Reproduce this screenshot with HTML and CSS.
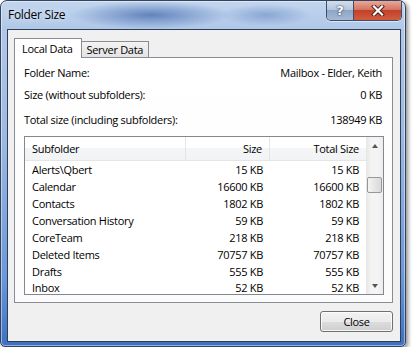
FILE: index.html
```html
<!DOCTYPE html>
<html lang="en">
<head>
    <meta charset="UTF-8">
    <title>Folder Size</title>
    <link rel="stylesheet" href="styles.css">
</head>
<body>
    <div class="window">
        <div class="titlebar">
            <span class="title">Folder Size</span>
            <div class="caption-buttons">
                <span class="cap-btn help">?</span>
                <span class="cap-btn close">
                    <svg width="16" height="11" viewBox="0 0 16 11">
                        <path d="M4 1.5 L12 9.5 M12 1.5 L4 9.5" stroke="#4a1d14" stroke-width="4" stroke-linecap="square"/>
                        <path d="M4 1.5 L12 9.5 M12 1.5 L4 9.5" stroke="#fff" stroke-width="2.2" stroke-linecap="square"/>
                    </svg>
                </span>
            </div>
        </div>
        <div class="client">
            <div class="tabs">
                <span class="tab active">Local Data</span>
                <span class="tab">Server Data</span>
            </div>
            <div class="panel">
                <div class="info-row first"><span>Folder Name:</span><span>Mailbox - Elder, Keith</span></div>
                <div class="info-row second"><span>Size (without subfolders):</span><span>0 KB</span></div>
                <div class="info-row third"><span>Total size (including subfolders):</span><span>138949 KB</span></div>
                <div class="list">
                    <div class="list-body">
                        <div class="list-header">
                            <span class="col name">Subfolder</span>
                            <span class="col num">Size</span>
                            <span class="col num last">Total Size</span>
                        </div>
                        <div class="list-row"><span class="col name">Alerts\Qbert</span><span class="col num">15 KB</span><span class="col num last">15 KB</span></div>
                        <div class="list-row"><span class="col name">Calendar</span><span class="col num">16600 KB</span><span class="col num last">16600 KB</span></div>
                        <div class="list-row"><span class="col name">Contacts</span><span class="col num">1802 KB</span><span class="col num last">1802 KB</span></div>
                        <div class="list-row"><span class="col name">Conversation History</span><span class="col num">59 KB</span><span class="col num last">59 KB</span></div>
                        <div class="list-row"><span class="col name">CoreTeam</span><span class="col num">218 KB</span><span class="col num last">218 KB</span></div>
                        <div class="list-row"><span class="col name">Deleted Items</span><span class="col num">70757 KB</span><span class="col num last">70757 KB</span></div>
                        <div class="list-row"><span class="col name">Drafts</span><span class="col num">555 KB</span><span class="col num last">555 KB</span></div>
                        <div class="list-row cut"><span class="col name">Inbox</span><span class="col num">52 KB</span><span class="col num last">52 KB</span></div>
                    </div>
                    <div class="scrollbar">
                        <div class="arrow up"></div>
                        <div class="track">
                            <div class="thumb"></div>
                        </div>
                        <div class="arrow down"></div>
                    </div>
                </div>
            </div>
            <div class="actions">
                <button class="btn">Close</button>
            </div>
        </div>
    </div>
</body>
</html>
```

FILE: styles.css
```css
body {
    margin: 0;
    background-color: #fff;
    font-family: 'Open Sans', 'Noto Sans', sans-serif;
    font-size: 11px;
    letter-spacing: -0.3px;
    color: #000;
}
.window {
    width: 406px;
    height: 347px;
    box-sizing: border-box;
    border: 1px solid #34435e;
    border-radius: 7px 7px 5px 5px;
    background:
        radial-gradient(ellipse 80px 14px at 150px 14px, rgba(60, 100, 170, 0.7), rgba(60, 100, 170, 0) 100%),
        radial-gradient(ellipse 45px 11px at 265px 14px, rgba(80, 118, 182, 0.45), rgba(80, 118, 182, 0) 100%),
        linear-gradient(to bottom, #c2d5ee 0, #b0c8e8 28px, #9cb9e2 40%, #6b98d8 80%, #3c70c4 100%);
    box-shadow: 2px 2px 4px rgba(0, 0, 0, 0.45), inset 0 0 0 1px rgba(255, 255, 255, 0.45);
    display: flex;
    flex-direction: column;
}
.titlebar {
    height: 28px;
    display: flex;
    align-items: flex-start;
}
.title {
    margin: 6px 0 0 7px;
    font-size: 12px;
    line-height: 16px;
    text-shadow: 0 0 6px rgba(255, 255, 255, 0.9);
}
.caption-buttons {
    margin-left: auto;
    margin-right: 3px;
    display: flex;
    height: 19px;
    border: 1px solid #3f4d68;
    border-top: none;
    border-radius: 0 0 5px 5px;
    overflow: hidden;
    box-shadow: 0 1px 0 rgba(255, 255, 255, 0.5);
}
.cap-btn {
    display: flex;
    align-items: center;
    justify-content: center;
    height: 19px;
}
.help {
    width: 26px;
    border-right: 1px solid #3f4d68;
    background: linear-gradient(to bottom, #d3ddeb 0, #b6c6dc 45%, #8ea6c6 50%, #a4b9d5 100%);
    color: #fff;
    font-family: 'DejaVu Sans', sans-serif;
    font-weight: bold;
    font-size: 13px;
    letter-spacing: 0;
    text-shadow: 0 0 1px #2c3a55, 0 0 2px #2c3a55;
}
.close {
    width: 47px;
    background: linear-gradient(to bottom, #e7a99c 0, #d67461 45%, #c2412a 50%, #d25c3f 100%);
}
.client {
    flex: 1;
    margin: 0 4px 4px 6px;
    border: 1px solid #2f3d56;
    background-color: #f0f0f0;
    padding: 8px 7px 9px 6px;
    display: flex;
    flex-direction: column;
}
.tabs {
    display: flex;
    align-items: flex-end;
    height: 19px;
    position: relative;
    z-index: 1;
}
.tab {
    box-sizing: border-box;
    height: 16px;
    padding: 0 5px 0 5px;
    border: 1px solid #898c95;
    border-bottom: none;
    background: linear-gradient(to bottom, #f3f3f3, #e3e3e3);
    line-height: 16px;
    margin-left: -1px;
}
.tab.active {
    height: 20px;
    margin: 0 0 -1px 0;
    padding: 1px 8px 0 7px;
    background: #fff;
    line-height: 17px;
    position: relative;
    z-index: 2;
}
.panel {
    height: 246px;
    box-sizing: border-box;
    border: 1px solid #898c95;
    background: linear-gradient(to bottom, #ffffff, #fbfbfb);
    padding: 7px 8px 7px 9px;
}
.info-row {
    display: flex;
    justify-content: space-between;
    height: 16px;
    line-height: 16px;
    padding-right: 2px;
}
.info-row.second {
    margin-top: 6px;
}
.info-row.third {
    margin-top: 9px;
}
.list {
    margin-top: 8px;
    height: 159px;
    box-sizing: border-box;
    border: 1px solid #828790;
    background: #fff;
    display: flex;
}
.list-body {
    flex: 1;
    overflow: hidden;
}
.list-header, .list-row {
    display: grid;
    grid-template-columns: 161px 84px 96px;
}
.list-header {
    height: 24px;
    background: linear-gradient(to bottom, #fff 0, #fff 45%, #f4f5f6 50%, #f2f3f4 100%);
    border-bottom: 1px solid #e5e5e5;
    box-sizing: border-box;
}
.list-header .col {
    line-height: 23px;
    border-right: 1px solid #e3e4e6;
}
.list-header .col.last {
    border-right: none;
}
.list-row {
    height: 17px;
    line-height: 17px;
}
.list-row.cut {
    height: 14px;
    padding-top: 1px;
    line-height: 13px;
}
.col {
    padding: 0 7px;
    white-space: nowrap;
}
.col.num {
    text-align: right;
}
.scrollbar {
    width: 17px;
    display: flex;
    flex-direction: column;
    background: linear-gradient(to right, #e6e6e6, #f4f4f4 30%, #f4f4f4 70%, #ececec);
}
.arrow {
    height: 17px;
    display: flex;
    align-items: center;
    justify-content: center;
}
.arrow::before {
    content: '';
    border-left: 3.5px solid transparent;
    border-right: 3.5px solid transparent;
}
.arrow.up::before {
    border-bottom: 4px solid #555;
}
.arrow.down::before {
    border-top: 4px solid #555;
}
.track {
    flex: 1;
    padding-top: 23px;
}
.thumb {
    margin: 0 1px 0 1px;
    height: 16px;
    box-sizing: border-box;
    border: 1px solid #979797;
    border-radius: 2px;
    background: linear-gradient(to right, #f5f5f5, #e6e6e6 50%, #d9d9d9);
}
.actions {
    margin-top: 8px;
    display: flex;
    justify-content: flex-end;
}
.btn {
    width: 73px;
    height: 21px;
    border: 1px solid #707070;
    border-radius: 3px;
    background: linear-gradient(to bottom, #f2f2f2 0, #ebebeb 50%, #dddddd 51%, #cfcfcf 100%);
    box-shadow: inset 0 0 0 1px rgba(255, 255, 255, 0.8);
    font-family: 'Open Sans', 'Noto Sans', sans-serif;
    font-size: 11px;
    letter-spacing: -0.3px;
    color: #000;
    padding: 0;
}
```
